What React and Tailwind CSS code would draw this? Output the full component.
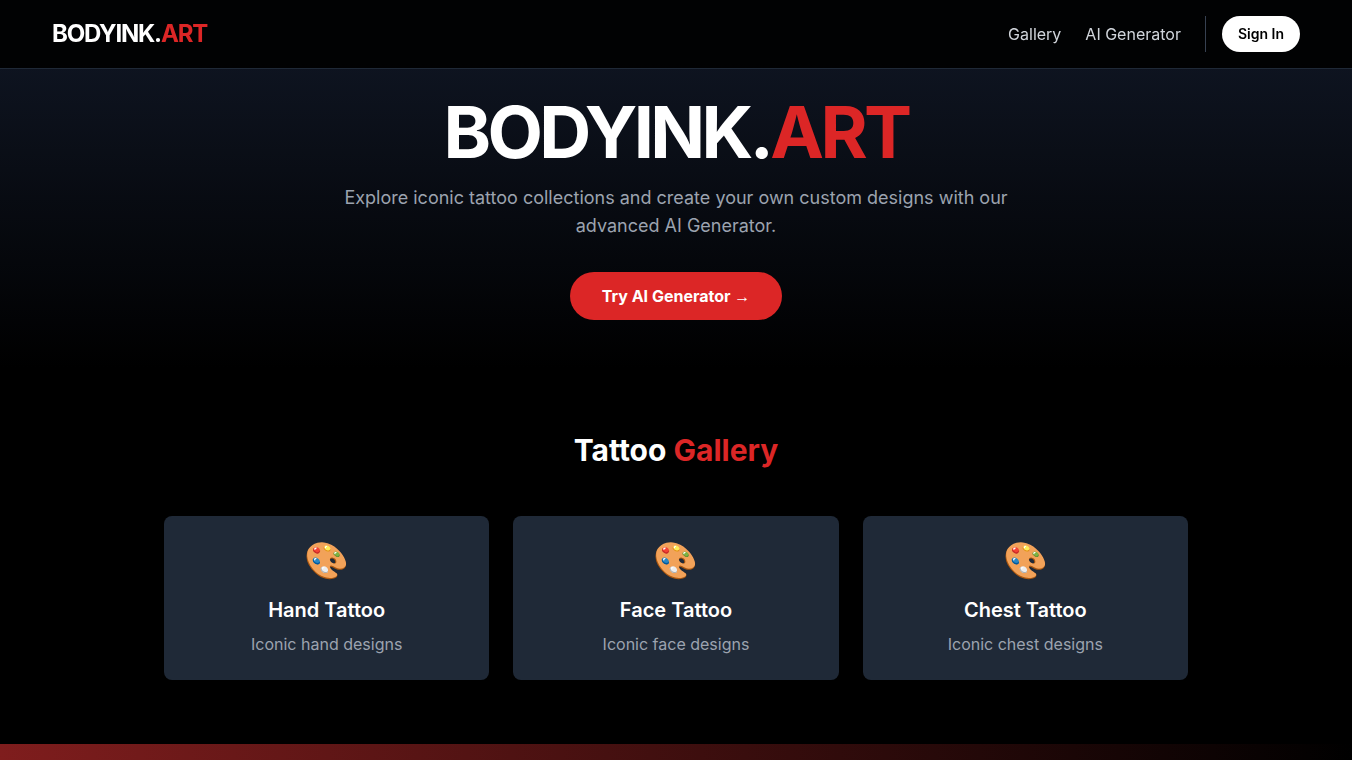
import React from 'react';

const COLLECTIONS = [
  { title: 'Hand Tattoo', text: 'Iconic hand designs' },
  { title: 'Face Tattoo', text: 'Iconic face designs' },
  { title: 'Chest Tattoo', text: 'Iconic chest designs' },
];

const App = () => {
  return (
    <div className="min-h-screen bg-black text-white font-['Inter',sans-serif]">

      {/* NAVBAR */}
      <nav className="fixed top-0 inset-x-0 z-50 bg-black/90 border-b border-[#1f2937]">
        <div className="max-w-7xl mx-auto px-4 py-4 flex items-center justify-between">
          <a href="#home" className="text-2xl font-bold tracking-tighter">
            BODYINK.<span className="text-[#dc2626]">ART</span>
          </a>
          <div className="flex items-center gap-6">
            <a href="#gallery" className="text-[#d1d5db] hover:text-white">Gallery</a>
            <a href="#generator" className="text-[#d1d5db] hover:text-white">AI Generator</a>
            <div className="flex items-center pl-4 border-l border-[#374151]">
              <button type="button" className="bg-white text-black text-sm font-semibold rounded-full px-4 py-2 hover:bg-gray-200">Sign In</button>
            </div>
          </div>
        </div>
      </nav>

      {/* HERO */}
      <header id="home" className="bg-linear-to-b/srgb from-[#111827] to-black px-4 pt-24 pb-12 text-center">
        <h1 className="text-7xl font-bold tracking-tighter mb-4">
          BODYINK.<span className="text-[#dc2626]">ART</span>
        </h1>
        <p className="text-lg text-[#9ca3af] max-w-2xl mx-auto mb-8">
          Explore iconic tattoo collections and create your own custom designs with our advanced AI Generator.
        </p>
        <a href="#generator" className="inline-block align-top bg-[#dc2626] font-bold rounded-full px-8 py-3 hover:bg-red-700">
          Try AI Generator <span className="font-['Liberation_Sans',sans-serif] leading-none">→</span>
        </a>
      </header>

      {/* GALLERY */}
      <section id="gallery" className="max-w-5xl mx-auto py-16">
        <h2 className="text-3xl font-bold text-center mb-12">
          Tattoo <span className="text-[#dc2626]">Gallery</span>
        </h2>
        <div className="grid grid-cols-3 gap-6">
          {COLLECTIONS.map((c) => (
            <div key={c.title} className="bg-[#1f2937] rounded-lg p-6 text-center">
              <div className="text-4xl mb-4">🎨</div>
              <h3 className="text-xl font-semibold mb-2">{c.title}</h3>
              <p className="text-[#9ca3af]">{c.text}</p>
            </div>
          ))}
        </div>
      </section>

      {/* BANNER */}
      <section id="generator" className="h-4 bg-linear-to-r/srgb from-[#7f1d1d] to-black"></section>
    </div>
  );
};

export default App;
